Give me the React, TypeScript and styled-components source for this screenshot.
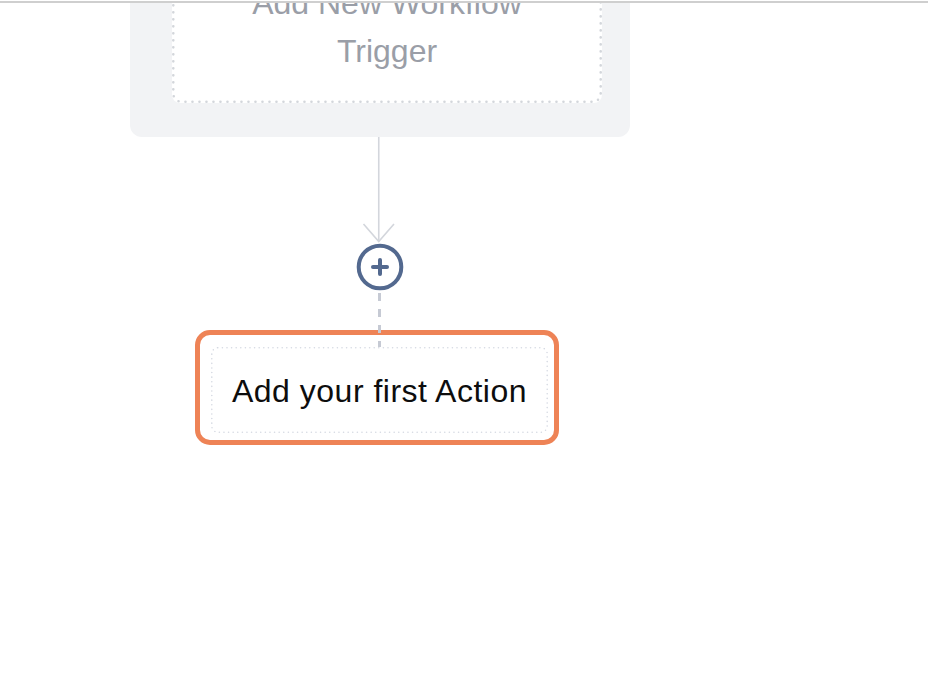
import React from "react";
import styled, { createGlobalStyle } from "styled-components";

const GlobalStyle = createGlobalStyle`
  html, body {
    margin: 0;
    padding: 0;
    background: #ffffff;
    font-family: "Liberation Sans", Arial, Helvetica, sans-serif;
  }
  * { box-sizing: border-box; }
`;

const dotted = (
  w: number,
  h: number,
  r: number,
  color: string,
  sw: number,
  gap: number
) => {
  const svg = `<svg xmlns='http://www.w3.org/2000/svg' width='${w}' height='${h}'><rect x='${sw / 2}' y='${sw / 2}' width='${w - sw}' height='${h - sw}' rx='${r}' ry='${r}' fill='none' stroke='${color}' stroke-width='${sw}' stroke-dasharray='0 ${gap}' stroke-linecap='round'/></svg>`;
  return `url("data:image/svg+xml,${encodeURIComponent(svg)}")`;
};

const Page = styled.div`
  width: 928px;
  height: 686px;
  display: flex;
  flex-direction: column;
  overflow: hidden;
  background: #ffffff;
`;

const TopRule = styled.div`
  margin-top: 1px;
  height: 2px;
  flex: none;
  background: #cfcfcf;
  position: relative;
  z-index: 2;
`;

const Viewport = styled.div`
  flex: 1;
  overflow: hidden;
`;

const Canvas = styled.div`
  width: 500px;
  margin: -76px 0 0 130px;
  display: flex;
  flex-direction: column;
  align-items: center;
`;

const TriggerCard = styled.div`
  width: 500px;
  padding: 28px 28px 34px 42px;
  background: #f2f3f5;
  border-radius: 12px;
`;

const TriggerSlot = styled.div`
  width: 430px;
  height: 148px;
  padding: 24px 20px 28px;
  border-radius: 8px;
  background-color: #ffffff;
  background-image: ${dotted(430, 148, 8, "#d3d6db", 2.6, 7)};
  background-repeat: no-repeat;
  display: flex;
  justify-content: center;
`;

const TriggerText = styled.div`
  max-width: 320px;
  text-align: center;
  font-size: 32px;
  line-height: 48px;
  color: #9a9ea7;
`;

const ArrowSvg = styled.svg`
  display: block;
  flex: none;
`;

const AddButton = styled.button`
  width: 48px;
  height: 48px;
  padding: 0;
  border: none;
  background: transparent;
  display: block;
  cursor: pointer;
`;

const DashedLink = styled.div`
  width: 3px;
  height: 56px;
  margin-left: -1px;
  margin-bottom: -17px;
  position: relative;
  z-index: 1;
  background: repeating-linear-gradient(
    to bottom,
    transparent 0px,
    transparent 2px,
    #c6cad4 2px,
    #c6cad4 10px,
    transparent 10px,
    transparent 16px
  );
`;

const ActionCard = styled.div`
  align-self: flex-start;
  margin-left: 65px;
  width: 364px;
  height: 115px;
  padding: 12px 6px 7px 11px;
  border: 5px solid #ee8356;
  border-radius: 15px;
  background: #ffffff;
`;

const ActionSlot = styled.div`
  width: 337px;
  height: 86px;
  border-radius: 6px;
  background-image: ${dotted(337, 86, 6, "#d5d9e2", 1.6, 4.6)};
  background-repeat: no-repeat;
  display: flex;
  align-items: center;
  justify-content: center;
`;

const ActionText = styled.span`
  font-size: 32px;
  letter-spacing: 0.5px;
  color: #0d0d0d;
  padding-top: 3px;
`;

export default function App() {
  return (
    <>
      <GlobalStyle />
      <Page>
        <TopRule />
        <Viewport>
          <Canvas>
            <TriggerCard>
              <TriggerSlot>
                <TriggerText>Add New Workflow Trigger</TriggerText>
              </TriggerSlot>
            </TriggerCard>
            <ArrowSvg width="40" height="106" viewBox="0 0 40 106">
              <line x1="18.75" y1="0" x2="18.75" y2="104.5" stroke="#d3d6dc" strokeWidth="1.6" />
              <polyline
                points="3.5,87 18.75,104.5 34,87"
                fill="none"
                stroke="#d3d6dc"
                strokeWidth="1.6"
                strokeLinejoin="miter"
              />
            </ArrowSvg>
            <AddButton aria-label="Add step">
              <svg width="48" height="48" viewBox="0 0 48 48">
                <circle cx="24" cy="24" r="21.3" fill="#ffffff" stroke="#53698f" strokeWidth="4" />
                <line x1="17" y1="24" x2="31" y2="24" stroke="#53698f" strokeWidth="4" strokeLinecap="round" />
                <line x1="24" y1="17" x2="24" y2="31" stroke="#53698f" strokeWidth="4" strokeLinecap="round" />
              </svg>
            </AddButton>
            <DashedLink />
            <ActionCard>
              <ActionSlot>
                <ActionText>Add your first Action</ActionText>
              </ActionSlot>
            </ActionCard>
          </Canvas>
        </Viewport>
      </Page>
    </>
  );
}
